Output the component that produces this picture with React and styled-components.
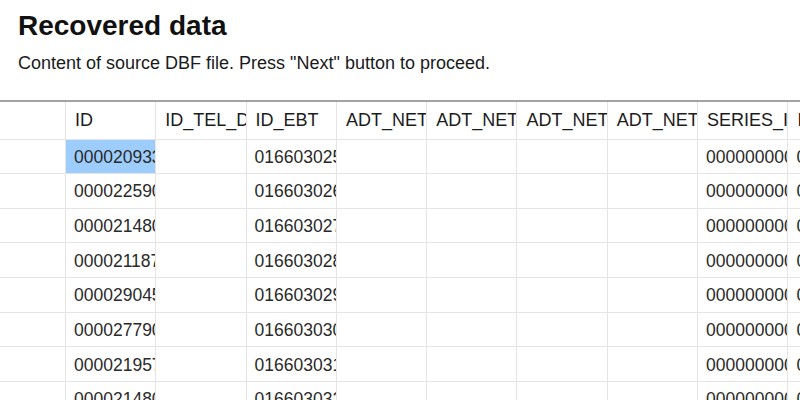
import React from 'react';
import styled, { createGlobalStyle } from 'styled-components';

const GlobalStyle = createGlobalStyle`
	html, body {
		margin: 0;
		padding: 0;
		background: #ffffff;
		overflow: hidden;
	}
	body {
		font-family: "Liberation Sans", Arial, sans-serif;
	}
`;

const Page = styled.div`
	width: 800px;
	height: 400px;
	overflow: hidden;
	background: #ffffff;
`;

const Header = styled.header`
	padding: 10px 0 0 18px;
	height: 100px;
	box-sizing: border-box;

	h1 {
		margin: 0;
		font-size: 28px;
		line-height: 32px;
		font-weight: bold;
		color: #111111;
	}

	p {
		margin: 10px 0 0;
		font-size: 18px;
		line-height: 22px;
		color: #1a1a1a;
	}
`;

const Grid = styled.div`
	display: grid;
	grid-template-columns: 66px repeat(9, 90.3px);
	grid-auto-rows: 34.67px;
	grid-template-rows: 37.5px;
	border-top: 2px solid #a3a3a3;
	width: max-content;
`;

const Cell = styled.div`
	box-sizing: border-box;
	border-right: 1px solid #e4e4e4;
	border-bottom: 1px solid #e4e4e4;
	padding-left: ${p => (p.$head ? '9px' : '8px')};
	padding-top: ${p => (p.$head ? '0' : '2px')};
	font-size: ${p => (p.$head ? '18px' : '17.5px')};
	color: ${p => (p.$head ? '#1c1c1c' : '#2a2a2a')};
	background: ${p => (p.$selected ? '#9dcdfd' : '#ffffff')};
	white-space: nowrap;
	overflow: hidden;
	display: flex;
	align-items: center;
`;

const columns = ['ID', 'ID_TEL_DEV', 'ID_EBT', 'ADT_NET_1', 'ADT_NET_2', 'ADT_NET_3', 'ADT_NET_4', 'SERIES_ID', 'NUMBER'];

const rows = [
	['0000209333', '', '016603025', '', '', '', '', '0000000001', '0001'],
	['0000225901', '', '016603026', '', '', '', '', '0000000001', '0001'],
	['0000214802', '', '016603027', '', '', '', '', '0000000001', '0001'],
	['0000211873', '', '016603028', '', '', '', '', '0000000001', '0001'],
	['0000290454', '', '016603029', '', '', '', '', '0000000001', '0001'],
	['0000277905', '', '016603030', '', '', '', '', '0000000001', '0001'],
	['0000219576', '', '016603031', '', '', '', '', '0000000001', '0001'],
	['0000214807', '', '016603032', '', '', '', '', '0000000001', '0001'],
];

const App = () => {
	return (
		<Page>
			<GlobalStyle />
			<Header>
				<h1>Recovered data</h1>
				<p>Content of source DBF file. Press "Next" button to proceed.</p>
			</Header>

			<Grid>
				<Cell $head />
				{columns.map(col => (
					<Cell key={col} $head>{col}</Cell>
				))}
				{rows.map((row, r) => (
					<React.Fragment key={r}>
						<Cell />
						{row.map((value, c) => (
							<Cell key={c} $selected={r === 0 && c === 0}>{value}</Cell>
						))}
					</React.Fragment>
				))}
			</Grid>
		</Page>
	);
};

export default App;
